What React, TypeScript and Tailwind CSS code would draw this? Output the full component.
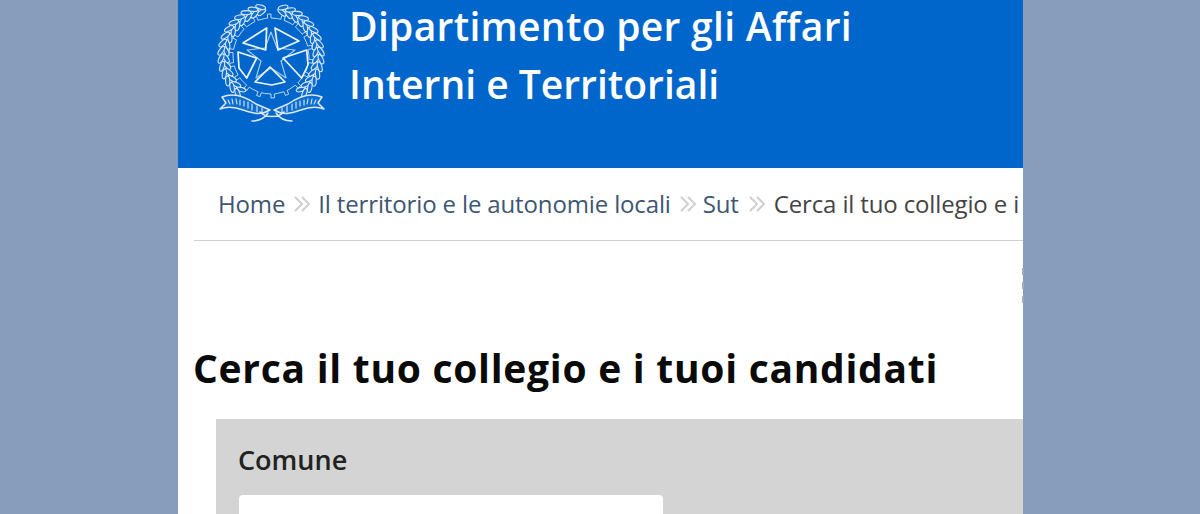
const font = { fontFamily: '"Open Sans", "Noto Sans", sans-serif' };

const CX = 57;
const CY = 56;
const rad = (d: number) => (d * Math.PI) / 180;

function wreathLeaves(from: number, to: number, count: number) {
  const out: { x: number; y: number; r: number }[] = [];
  for (let i = 0; i < count; i++) {
    const a = from + ((to - from) * i) / (count - 1);
    const dir = to > from ? 1 : -1;
    [45, 50].forEach((R, k) => {
      out.push({
        x: CX + R * Math.cos(rad(a)),
        y: CY + R * Math.sin(rad(a)),
        r: a + 90 * dir + (k === 0 ? -28 : 28) * dir,
      });
    });
  }
  return out;
}

function gearPath() {
  const teeth = 18;
  let d = "";
  for (let i = 0; i < teeth; i++) {
    const s = (360 / teeth) * i;
    const step = 360 / teeth / 4;
    const pts: [number, number][] = [
      [38, s],
      [38, s + step],
      [42, s + step],
      [42, s + step * 2],
      [38, s + step * 2],
    ];
    pts.forEach(([r, a], j) => {
      const x = CX + r * Math.cos(rad(a));
      const y = CY + r * Math.sin(rad(a));
      d += `${i === 0 && j === 0 ? "M" : "L"}${x.toFixed(1)} ${y.toFixed(1)} `;
    });
  }
  return d + "Z";
}

function Emblem() {
  const leaves = [...wreathLeaves(132, 258, 15), ...wreathLeaves(48, -76, 15)];
  return (
    <svg width="116" height="124" viewBox="0 0 116 124" fill="none" stroke="#dbe9f8" strokeWidth="1.1" strokeLinejoin="round" strokeLinecap="round">
      <path d={gearPath()} strokeWidth="1" opacity="0.85" />
      {leaves.map((l, i) => (
        <ellipse key={i} cx={l.x} cy={l.y} rx="5" ry="2.1" fill="#0f6fd0" transform={`rotate(${l.r} ${l.x} ${l.y})`} />
      ))}
      <g strokeWidth="1.7" stroke="#eef5fd">
        <path d="M29 43 L52.7 28 L51.7 50 Z" />
        <path d="M61 28 L85 41 L64 50 Z" />
        <path d="M69 58 L92.7 50 L94 65 L87.7 78 Z" />
        <path d="M24 52 L42.7 58 L32.7 78 L25 68 Z" />
        <path d="M56 67 L71 82 L57.7 85 L41 82 Z" />
        <path d="M57 32 L63 48 L81 50 L67 61 L72 78 L57 68 L42 78 L47 61 L33 50 L51 48 Z" strokeWidth="1.2" opacity="0.7" />
      </g>
      <path d="M8 97 C20 92 32 97 42 104 L56 110 C46 116 38 113 29 110 C21 107 14 106 6 109 L12 103 Z M108 97 C96 92 84 97 74 104 L60 110 C70 116 78 113 87 110 C95 107 102 106 110 109 L104 103 Z" strokeWidth="1.5" fill="#0f6fd0" />
      <path d="M14 100 l2 4 M18 99 l1 5 M22 99 l1 5 M26 100 l0 5 M30 101 l0 5 M34 102 l0 6 M38 104 l0 6 M43 106 l0 6 M48 108 l0 5 M102 100 l-2 4 M98 99 l-1 5 M94 99 l-1 5 M90 100 l0 5 M86 101 l0 5 M82 102 l0 6 M78 104 l0 6 M73 106 l0 6 M68 108 l0 5" />
      <path d="M46 112 C52 118 64 118 70 112 M54 113 C50 119 44 121 38 121 M62 113 C66 119 72 121 78 121" strokeWidth="1.5" />
    </svg>
  );
}

function Sep({ className }: { className: string }) {
  return (
    <svg className={className} width="18" height="16" viewBox="0 0 18 16" fill="none" stroke="#cfcfcf" strokeWidth="2">
      <path d="M2 1 L9 8 L2 15 M9 1 L16 8 L9 15" />
    </svg>
  );
}

export default function App() {
  return (
    <div className="h-[514px] w-[1200px] overflow-hidden bg-[#889dbb]" style={font}>
      <div className="relative ml-[178px] h-[514px] w-[845px] bg-white">
        <header className="flex h-[168px] bg-[#0066cc]">
          <div className="ml-[36px]">
            <Emblem />
          </div>
          <div className="ml-[19px] mt-[-3px] whitespace-nowrap text-[39px] font-semibold leading-[58px] tracking-[0.3px] text-white">
            <div>Dipartimento per gli Affari</div>
            <div className="tracking-[0px]">Interni e Territoriali</div>
          </div>
        </header>
        <nav className="ml-[16px] flex h-[73px] items-center whitespace-nowrap border-b border-[#d0d0d0] pb-[1px] pl-[24px] text-[24px] tracking-[-0.14px] text-[#3d5674]">
          <span>Home</span>
          <Sep className="ml-[8px] mr-[7px]" />
          <span>Il territorio e le autonomie locali</span>
          <Sep className="ml-[8px] mr-[6px]" />
          <span>Sut</span>
          <Sep className="ml-[9px] mr-[8px]" />
          <span className="text-[#444444]">Cerca il tuo collegio e i</span>
        </nav>
        <div className="absolute left-[844px] top-[268px] flex flex-col gap-[7px]">
          <span className="h-[7px] w-[2px] bg-[#a3adba]" />
          <span className="h-[7px] w-[2px] bg-[#a3adba]" />
          <span className="h-[7px] w-[2px] bg-[#a3adba]" />
        </div>
        <h1 className="ml-[15px] mt-[99px] whitespace-nowrap text-[39px] font-bold leading-[56px] tracking-[0.72px] text-[#0a0a0a]">
          Cerca il tuo collegio e i tuoi candidati
        </h1>
        <section className="ml-[38px] mt-[23px] h-[200px] bg-[#d4d4d4] pl-[22px] pt-[21px]">
          <div className="text-[27px] font-semibold leading-[40px] text-[#222222]">Comune</div>
          <div className="ml-[1px] mt-[15px] h-[60px] w-[424px] rounded-[4px] bg-white" />
        </section>
      </div>
    </div>
  );
}
